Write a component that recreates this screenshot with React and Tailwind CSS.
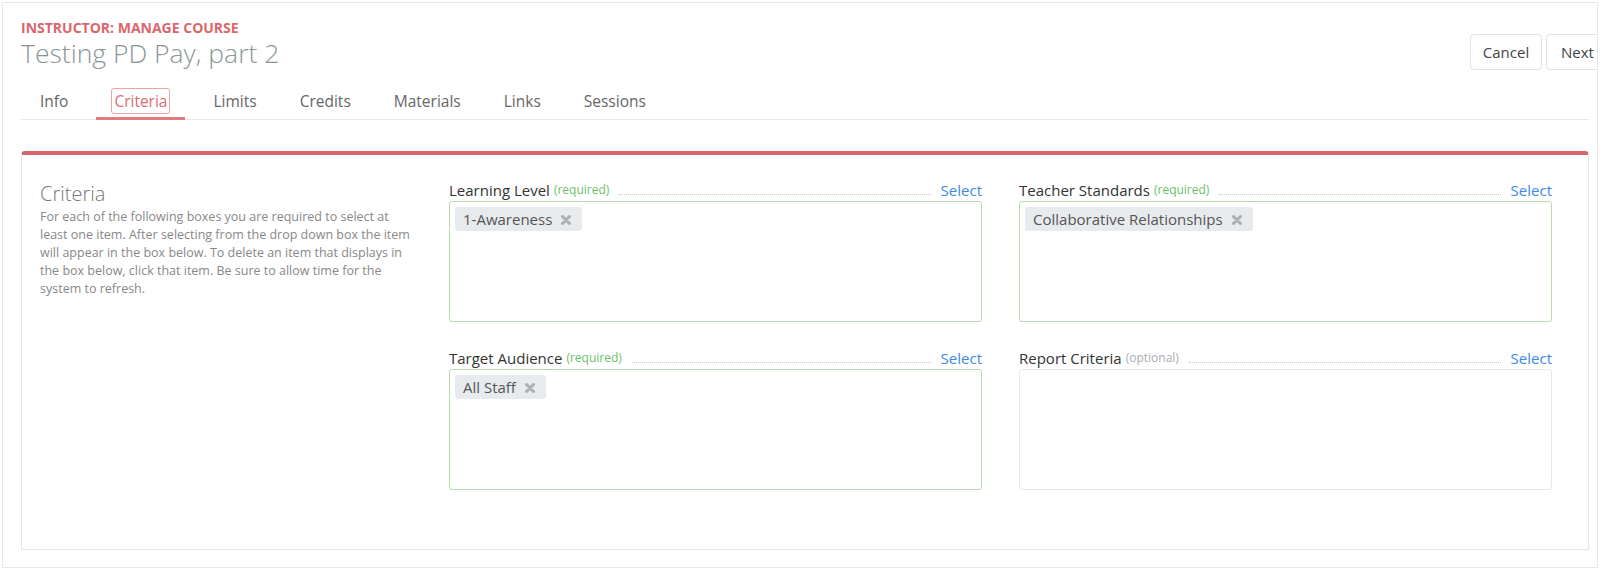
import { useState } from 'react';

const TABS = ['Info', 'Criteria', 'Limits', 'Credits', 'Materials', 'Links', 'Sessions'];

const FIELDS = [
  { label: 'Learning Level', note: 'required', items: ['1-Awareness'] },
  { label: 'Teacher Standards', note: 'required', items: ['Collaborative Relationships'] },
  { label: 'Target Audience', note: 'required', items: ['All Staff'] },
  { label: 'Report Criteria', note: 'optional', items: [] },
];

const Chip = ({ text, onRemove }) => (
  <button
    type="button"
    onClick={onRemove}
    className="h-[24px] flex items-center gap-[9px] pl-[8px] pr-[11px] rounded-[3px] bg-[#e8ebee] text-[15px] text-[#555] cursor-pointer"
  >
    {text}
    <svg width="10" height="10" viewBox="0 0 10 10" className="mt-[1px]">
      <path d="M1.5 1.5 L8.5 8.5 M8.5 1.5 L1.5 8.5" stroke="#abaeb2" strokeWidth="3" strokeLinecap="round" />
    </svg>
  </button>
);

const Field = ({ field, onRemove }) => {
  const required = field.note === 'required';
  return (
    <div>
      <div className="flex items-end h-[20px] mb-[1px]">
        <span className="text-[15px] leading-[20px] text-[#333]">{field.label}</span>
        <span className={`ml-[4px] text-[12px] leading-[20px] ${required ? 'text-[#6cbf6c]' : 'text-[#a8adb2]'}`}>
          ({field.note})
        </span>
        <span className="flex-1 mx-[10px] mb-[5px] border-b border-dotted border-[#c4c8cc]" />
        <a href="#" className="text-[15px] leading-[20px] text-[#3d8ae6]">Select</a>
      </div>
      <div
        className={`h-[121px] rounded-[3px] border p-[5px] flex flex-wrap content-start gap-[5px] ${
          required ? 'border-[#b5dcaa]' : 'border-[#e6e8ea]'
        }`}
      >
        {field.items.map((it) => (
          <Chip key={it} text={it} onRemove={() => onRemove(field.label, it)} />
        ))}
      </div>
    </div>
  );
};

export default function App() {
  const [active, setActive] = useState('Criteria');
  const [fields, setFields] = useState(FIELDS);

  const removeItem = (label, item) =>
    setFields((fs) => fs.map((f) => (f.label === label ? { ...f, items: f.items.filter((i) => i !== item) } : f)));

  return (
    <div className="w-[1600px] h-[570px] bg-white p-[2px] font-['Open_Sans',sans-serif]">
      <div className="h-[566px] border border-[#e8e8e8] overflow-hidden">
        {/* header */}
        <div className="flex justify-between pl-[18px] pt-[15px]">
          <div>
            <div className="text-[14px] leading-[20px] font-bold text-[#d9666b] uppercase">Instructor: Manage Course</div>
            <h1 className="text-[26.5px] leading-[34px] font-light text-[#8a9696] -mt-[2px]">Testing PD Pay, part 2</h1>
          </div>
          <div className="flex gap-[4px] mt-[16px] -mr-[13px]">
            <button className="h-[36px] w-[72px] rounded-[4px] border border-[#e1e1e1] text-[15px] text-[#444] bg-white">Cancel</button>
            <button className="h-[36px] w-[64px] pl-[14px] text-left rounded-[4px] border border-[#e1e1e1] text-[15px] text-[#444] bg-white">Next</button>
          </div>
        </div>

        {/* tabs */}
        <div className="mt-[12px] ml-[18px] mr-[8px] flex border-b border-[#e8e8e8]">
          <div className="flex gap-[13px] ml-[4px]">
            {TABS.map((t) => (
              <button
                key={t}
                type="button"
                onClick={() => setActive(t)}
                className={`px-[15px] pt-[4px] h-[38px] -mb-[1px] border-b-[3px] text-[15.5px] text-[#666] cursor-pointer ${
                  active === t ? 'border-[#e07b7e]' : 'border-transparent'
                }`}
              >
                <span className={active === t ? 'px-[2px] py-[1px] rounded-[3px] border border-[#f0a3a5] text-[#dc6d70]' : ''}>{t}</span>
              </button>
            ))}
          </div>
        </div>

        {/* criteria card */}
        <div className="mt-[31px] ml-[18px] mr-[8px] h-[399px] rounded-t-[4px] border border-[#e6e6e6] border-t-[4px] border-t-[#d9666b] flex pl-[18px] pr-[36px] pt-[25px]">
          <div className="w-[409px] shrink-0">
            <h2 className="text-[20px] leading-[28px] font-light text-[#777]">Criteria</h2>
            <p className="w-[372px] text-[12.5px] leading-[18px] text-[#888]">
              For each of the following boxes you are required to select at least one item. After selecting from the drop
              down box the item will appear in the box below. To delete an item that displays in the box below, click
              that item. Be sure to allow time for the system to refresh.
            </p>
          </div>
          <div className="flex-1 grid grid-cols-2 gap-x-[37px] gap-y-[26px] content-start">
            {fields.map((f) => (
              <Field key={f.label} field={f} onRemove={removeItem} />
            ))}
          </div>
        </div>
      </div>
    </div>
  );
}
